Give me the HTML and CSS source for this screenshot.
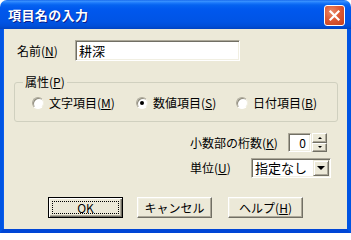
FILE: index.html
```html
<!DOCTYPE html>
<html lang="ja">
<head>
<meta charset="utf-8">
<title>項目名の入力</title>
<link rel="stylesheet" href="styles.css">
</head>
<body>
<div class="window">
  <div class="titlebar">
    <span class="title">項目名の入力</span>
    <span class="close">
      <svg width="19" height="19" viewBox="0 0 19 19"><path d="M5.5 5.5 L13.5 13.5 M13.5 5.5 L5.5 13.5" stroke="#fff" stroke-width="2.2" stroke-linecap="square"/></svg>
    </span>
  </div>
  <div class="frame">
    <div class="name-row">
      <span class="lbl name-lbl">名前(<u>N</u>)</span>
      <div class="textbox name-box">耕深</div>
    </div>
    <fieldset class="group">
      <legend>属性(<u>P</u>)</legend>
      <div class="radios">
        <span class="radio-item item-1"><span class="radio"></span>文字項目(<u>M</u>)</span>
        <span class="radio-item item-2"><span class="radio checked"></span>数値項目(<u>S</u>)</span>
        <span class="radio-item"><span class="radio"></span>日付項目(<u>B</u>)</span>
      </div>
    </fieldset>
    <div class="opt-row digits-row">
      <span class="lbl digits-lbl">小数部の桁数(<u>K</u>)</span>
      <div class="spinner">
        <div class="textbox spin-box">0</div>
        <div class="spin-btns">
          <span class="sbtn"><span class="tri-up"></span></span>
          <span class="sbtn"><span class="tri-down"></span></span>
        </div>
      </div>
    </div>
    <div class="opt-row unit-row">
      <span class="lbl unit-lbl">単位(<u>U</u>)</span>
      <div class="combo">
        <span class="combo-text">指定なし</span>
        <span class="combo-btn"><span class="tri-big"></span></span>
      </div>
    </div>
    <div class="buttons">
      <span class="btn default"><span class="focus">OK</span></span>
      <span class="btn">キャンセル</span>
      <span class="btn help">ヘルプ(<u>H</u>)</span>
    </div>
  </div>
</div>
</body>
</html>
```
FILE: styles.css
```css
html, body {
  margin: 0;
  padding: 0;
  background: #ffffff;
}
body {
  font-family: "Noto Sans CJK JP", "Liberation Sans", sans-serif;
  font-size: 12px;
  color: #000;
}
.window {
  width: 351px;
  height: 233px;
  display: flex;
  flex-direction: column;
}
.titlebar {
  height: 29px;
  flex: none;
  border-radius: 7px 7px 0 0;
  background: linear-gradient(to bottom, #0A5AE6 0, #3D95FF 1px, #1A77FA 3px, #0563F0 5px, #0058EE 9px, #0056EA 50%, #0054E5 75%, #004ED8 90%, #0043C2 100%);
  display: flex;
  align-items: center;
  padding: 0 6px 0 8px;
  box-sizing: border-box;
}
.title {
  flex: 1;
  color: #ffffff;
  font-weight: bold;
  font-size: 13px;
  letter-spacing: 0.4px;
  line-height: 16px;
  text-shadow: 1px 1px 0 #0A1E8C;
  padding-top: 1px;
}
.close {
  width: 19px;
  height: 19px;
  border: 1px solid #ffffff;
  border-radius: 3px;
  background: radial-gradient(circle at 35% 30%, #E98A6A 0, #DD5A36 45%, #C43E1A 100%);
  display: flex;
  margin-top: 1px;
}
.frame {
  flex: 1;
  background: #ECE9D8;
  border-left: 3px solid #0054E3;
  border-right: 4px solid #0054E3;
  border-bottom: 4px solid #0046D6;
  box-shadow: inset 1px 0 0 #0A5CEC;
  display: flex;
  flex-direction: column;
}
.lbl {
  line-height: 14px;
  white-space: nowrap;
}
.name-row {
  display: flex;
  align-items: center;
  margin-top: 11px;
  padding-left: 14px;
}
.name-lbl {
  width: 58px;
}
.textbox {
  box-sizing: border-box;
  background: #ffffff;
  border: 1px solid;
  border-color: #ACA899 #FFFFFF #FFFFFF #ACA899;
  box-shadow: inset 1px 1px 0 #716F64, inset -1px -1px 0 #F1EFE2;
}
.name-box {
  width: 165px;
  height: 21px;
  padding: 2px 3px;
  line-height: 15px;
  font-size: 13px;
}
.group {
  margin: 14px 0 0 11px;
  width: 324px;
  box-sizing: border-box;
  padding: 7px 0 11px 0;
  border: 1px solid #D0D0BF;
  border-radius: 3px;
  min-width: 0;
}
.group legend {
  margin-left: 8px;
  padding: 0 2px;
  line-height: 14px;
}
.radios {
  display: flex;
  align-items: center;
  padding-left: 17px;
  line-height: 14px;
}
.radio-item {
  display: flex;
  align-items: center;
  white-space: nowrap;
}
.item-1 { width: 104px; }
.item-2 { width: 100px; }
.radio {
  width: 12px;
  height: 12px;
  box-sizing: border-box;
  border-radius: 50%;
  background: #ffffff;
  border: 1px solid;
  border-color: #ACA899 #F1EFE2 #FFFFFF #ACA899;
  box-shadow: inset 1px 1px 0 #8E8B7C;
  margin-right: 5px;
  display: flex;
  align-items: center;
  justify-content: center;
}
.radio.checked::after {
  content: "";
  width: 4px;
  height: 4px;
  border-radius: 50%;
  background: #000;
}
.opt-row {
  display: flex;
  align-items: center;
  padding-left: 187px;
}
.digits-row {
  margin-top: 11px;
}
.unit-row {
  margin-top: 6px;
}
.digits-lbl { width: 98px; }
.unit-lbl { width: 61px; }
.spinner {
  display: flex;
  height: 19px;
}
.spin-box {
  width: 23px;
  height: 19px;
  text-align: right;
  padding: 1px 4px 0 0;
  line-height: 15px;
}
.spin-btns {
  display: flex;
  flex-direction: column;
  margin-left: 1px;
  width: 15px;
}
.sbtn {
  flex: 1;
  box-sizing: border-box;
  background: #ECE9D8;
  border: 1px solid;
  border-color: #FFFFFF #716F64 #716F64 #FFFFFF;
  box-shadow: inset -1px -1px 0 #ACA899;
  display: flex;
  align-items: center;
  justify-content: center;
}
.tri-up {
  width: 0;
  height: 0;
  border-left: 2px solid transparent;
  border-right: 2px solid transparent;
  border-bottom: 2px solid #000;
}
.tri-down {
  width: 0;
  height: 0;
  border-left: 2px solid transparent;
  border-right: 2px solid transparent;
  border-top: 2px solid #000;
}
.combo {
  width: 80px;
  height: 20px;
  box-sizing: border-box;
  background: #ffffff;
  border: 1px solid;
  border-color: #ACA899 #FFFFFF #FFFFFF #ACA899;
  box-shadow: inset 1px 1px 0 #716F64, inset -1px -1px 0 #F1EFE2;
  display: flex;
  align-items: center;
  padding: 1px 1px 1px 2px;
}
.combo-text {
  flex: 1;
  font-size: 13px;
  line-height: 16px;
  padding-left: 1px;
}
.combo-btn {
  width: 16px;
  height: 16px;
  box-sizing: border-box;
  background: #ECE9D8;
  border: 1px solid;
  border-color: #ECE9D8 #716F64 #716F64 #ECE9D8;
  box-shadow: inset 1px 1px 0 #FFFFFF, inset -1px -1px 0 #ACA899;
  display: flex;
  align-items: center;
  justify-content: center;
}
.tri-big {
  width: 0;
  height: 0;
  border-left: 4px solid transparent;
  border-right: 4px solid transparent;
  border-top: 4px solid #000;
}
.buttons {
  display: flex;
  margin-top: 19px;
  padding-left: 45px;
  gap: 14px;
}
.btn {
  width: 75px;
  height: 21px;
  box-sizing: border-box;
  background: #ECE9D8;
  border: 1px solid;
  border-color: #FFFFFF #716F64 #716F64 #FFFFFF;
  box-shadow: inset -1px -1px 0 #ACA899, inset 1px 1px 0 #F1EFE2;
  display: flex;
  align-items: center;
  justify-content: center;
  line-height: 14px;
  white-space: nowrap;
}
.btn.help {
  margin-left: 2px;
}
.btn.default {
  border: 1px solid #000000;
  box-shadow: inset 1px 1px 0 #FFFFFF, inset -1px -1px 0 #716F64, inset -2px -2px 0 #ACA899;
  padding: 3px;
}
.focus {
  flex: 1;
  align-self: stretch;
  border: 1px dotted #000;
  display: flex;
  align-items: center;
  justify-content: center;
}
```
